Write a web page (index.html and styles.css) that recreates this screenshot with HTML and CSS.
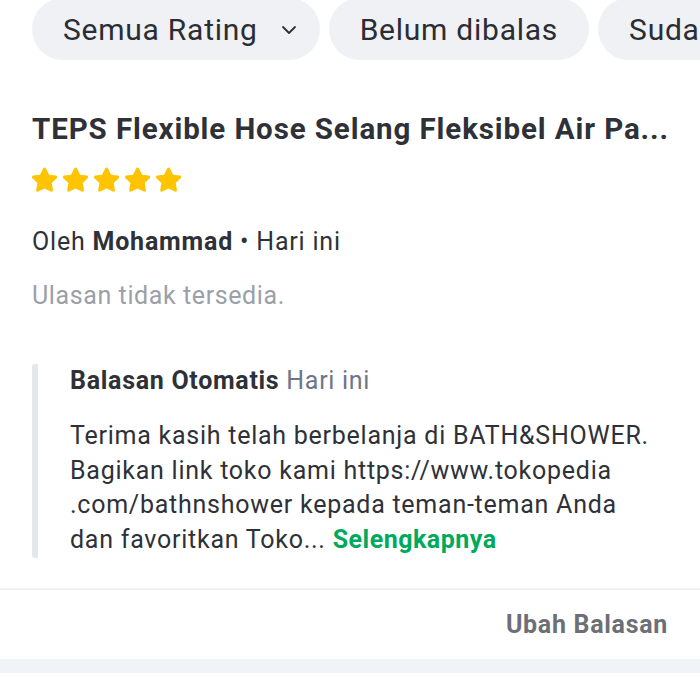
FILE: index.html
```html
<!DOCTYPE html>
<html lang="id">
<head>
<meta charset="utf-8">
<link rel="stylesheet" href="styles.css">
</head>
<body>
<div class="chips">
  <div class="chip chip-drop">Semua Rating
    <svg class="chev" width="16" height="10" viewBox="0 0 16 10"><path d="M2 2 L8 8 L14 2" fill="none" stroke="#2e3137" stroke-width="1.8" stroke-linecap="round" stroke-linejoin="round"/></svg>
  </div>
  <div class="chip">Belum dibalas</div>
  <div class="chip">Sudah dibalas</div>
</div>

<div class="card">
  <h1 class="title">TEPS Flexible Hose Selang Fleksibel Air Pa...</h1>
  <div class="stars">
    <svg viewBox="3 2.2 18 18"><path d="M12 2.5c.5 0 .9.3 1.1.7l2.2 4.5 4.9.7c.9.1 1.3 1.3.6 1.9l-3.6 3.5.9 4.9c.2.9-.8 1.6-1.6 1.2L12 17.6l-4.4 2.3c-.8.4-1.8-.3-1.6-1.2l.9-4.9L3.3 10.3c-.7-.6-.3-1.8.6-1.9l4.9-.7 2.2-4.5c.2-.4.6-.7 1-.7z" fill="#ffc400"/></svg>
    <svg viewBox="3 2.2 18 18"><path d="M12 2.5c.5 0 .9.3 1.1.7l2.2 4.5 4.9.7c.9.1 1.3 1.3.6 1.9l-3.6 3.5.9 4.9c.2.9-.8 1.6-1.6 1.2L12 17.6l-4.4 2.3c-.8.4-1.8-.3-1.6-1.2l.9-4.9L3.3 10.3c-.7-.6-.3-1.8.6-1.9l4.9-.7 2.2-4.5c.2-.4.6-.7 1-.7z" fill="#ffc400"/></svg>
    <svg viewBox="3 2.2 18 18"><path d="M12 2.5c.5 0 .9.3 1.1.7l2.2 4.5 4.9.7c.9.1 1.3 1.3.6 1.9l-3.6 3.5.9 4.9c.2.9-.8 1.6-1.6 1.2L12 17.6l-4.4 2.3c-.8.4-1.8-.3-1.6-1.2l.9-4.9L3.3 10.3c-.7-.6-.3-1.8.6-1.9l4.9-.7 2.2-4.5c.2-.4.6-.7 1-.7z" fill="#ffc400"/></svg>
    <svg viewBox="3 2.2 18 18"><path d="M12 2.5c.5 0 .9.3 1.1.7l2.2 4.5 4.9.7c.9.1 1.3 1.3.6 1.9l-3.6 3.5.9 4.9c.2.9-.8 1.6-1.6 1.2L12 17.6l-4.4 2.3c-.8.4-1.8-.3-1.6-1.2l.9-4.9L3.3 10.3c-.7-.6-.3-1.8.6-1.9l4.9-.7 2.2-4.5c.2-.4.6-.7 1-.7z" fill="#ffc400"/></svg>
    <svg viewBox="3 2.2 18 18"><path d="M12 2.5c.5 0 .9.3 1.1.7l2.2 4.5 4.9.7c.9.1 1.3 1.3.6 1.9l-3.6 3.5.9 4.9c.2.9-.8 1.6-1.6 1.2L12 17.6l-4.4 2.3c-.8.4-1.8-.3-1.6-1.2l.9-4.9L3.3 10.3c-.7-.6-.3-1.8.6-1.9l4.9-.7 2.2-4.5c.2-.4.6-.7 1-.7z" fill="#ffc400"/></svg>
  </div>
  <p class="meta">Oleh <b>Mohammad</b> • Hari ini</p>
  <p class="empty">Ulasan tidak tersedia.</p>

  <div class="reply">
    <div class="reply-head"><b>Balasan Otomatis</b> <span class="muted">Hari ini</span></div>
    <p class="reply-body">Terima kasih telah berbelanja di BATH&amp;SHOWER.<br>Bagikan link toko kami https://www.tokopedia<br>.com/bathnshower kepada teman-teman Anda<br>dan favoritkan Toko... <span class="more">Selengkapnya</span></p>
  </div>
</div>

<div class="actions">
  <span class="edit">Ubah Balasan</span>
</div>
<div class="band"></div>
</body>
</html>
```

FILE: styles.css
```css
html, body {
  margin: 0;
  padding: 0;
  background: #fff;
  font-family: Roboto, "Noto Sans", sans-serif;
  color: #2e3137;
}

.chips {
  display: flex;
  gap: 9px;
  padding-left: 32px;
  margin-top: -2px;
  overflow: hidden;
  white-space: nowrap;
}

.chip {
  flex: none;
  height: 62px;
  box-sizing: border-box;
  display: flex;
  align-items: center;
  padding: 0 31px;
  background: #eff1f5;
  border-radius: 31px;
  font-size: 30px;
  letter-spacing: 0.75px;
  color: #2a2d33;
}

.chip-drop {
  gap: 23px;
  padding-right: 23px;
}

.chev {
  margin-top: 2px;
}

.card {
  padding: 0 32px;
}

.title {
  margin: 49px 0 0;
  font-size: 29.5px;
  letter-spacing: 0.9px;
  font-weight: 700;
  line-height: 40px;
  color: #2e3137;
  white-space: nowrap;
}

.stars {
  display: flex;
  gap: 6px;
  margin-top: 18px;
}

.stars svg {
  width: 25px;
  height: 25px;
}

.meta {
  margin: 33px 0 0;
  font-size: 25px;
  letter-spacing: 0.8px;
  line-height: 34px;
  color: #2e3137;
}

.meta b {
  font-weight: 700;
}

.empty {
  margin: 20px 0 0;
  font-size: 25px;
  letter-spacing: 0.6px;
  line-height: 34px;
  color: #9ba0a8;
}

.reply {
  margin-top: 51px;
  border-left: 6px solid #e4e8ed;
  border-radius: 3px;
  padding-left: 32px;
}

.reply-head {
  font-size: 25px;
  letter-spacing: 0.7px;
  line-height: 34px;
  margin-top: 1px;
}

.reply-head b {
  font-weight: 700;
  color: #2e3137;
}

.muted {
  color: #6d7588;
}

.reply-body {
  margin: 21px 0 -3px;
  font-size: 25px;
  letter-spacing: 0.75px;
  line-height: 34.7px;
  color: #2e3137;
}

.more {
  color: #00aa5b;
  font-weight: 700;
  letter-spacing: 0.5px;
}

.actions {
  margin-top: 33px;
  border-top: 2px solid #f0f2f5;
  height: 69px;
  display: flex;
  align-items: center;
  justify-content: flex-end;
  padding-right: 32px;
}

.edit {
  font-size: 25px;
  letter-spacing: 0.7px;
  font-weight: 700;
  color: #6c6f75;
}

.band {
  height: 14px;
  background: #f0f3f7;
}
```
